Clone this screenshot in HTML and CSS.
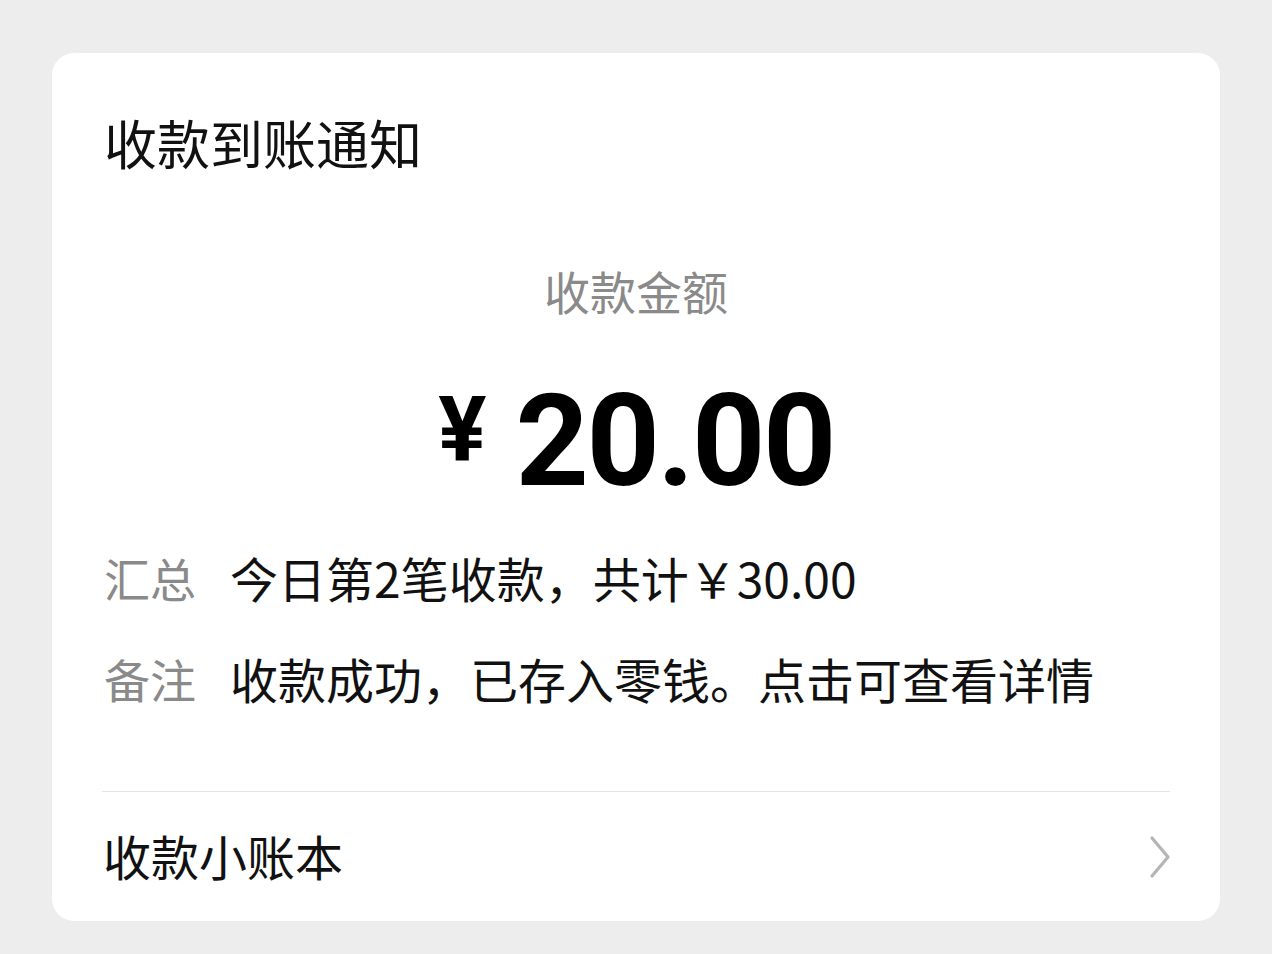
FILE: index.html
```html
<!DOCTYPE html>
<html lang="zh-CN">
<head>
<meta charset="UTF-8">
<meta name="viewport" content="width=device-width, initial-scale=1.0">
<title>收款到账通知</title>
<link rel="stylesheet" href="styles.css">
</head>
<body>

<div class="card">
    <h2 class="title">收款到账通知</h2>

    <div class="amount-label">收款金额</div>
    <div class="amount">
        <span class="currency">¥</span>
        <span class="value">20.00</span>
    </div>

    <div class="info">
        <div class="info-row">
            <span class="info-key">汇总</span>
            <span class="info-val">今日第2笔收款，共计￥30.00</span>
        </div>
        <div class="info-row">
            <span class="info-key">备注</span>
            <span class="info-val">收款成功，已存入零钱。点击可查看详情</span>
        </div>
    </div>

    <div class="footer">
        <span class="footer-text">收款小账本</span>
        <svg class="arrow" width="24" height="44" viewBox="0 0 24 44">
            <path d="M4 3 L20 22 L4 41" fill="none" stroke="#b5b5b5" stroke-width="3.2" stroke-linecap="round" stroke-linejoin="round"/>
        </svg>
    </div>
</div>

</body>
</html>
```

FILE: styles.css
```css
body {
    margin: 0;
    background-color: #ededed;
    font-family: "Noto Sans CJK SC", "Noto Sans", sans-serif;
    color: #111111;
}
.card {
    width: 1168px;
    height: 868px;
    margin: 53px 0 0 52px;
    background-color: #ffffff;
    border-radius: 22px;
    padding: 0 50px;
    box-sizing: border-box;
    display: flex;
    flex-direction: column;
}
.title {
    margin: 63px 0 0 2px;
    font-size: 53px;
    line-height: 53px;
    font-weight: normal;
}
.amount-label {
    margin-top: 98px;
    text-align: center;
    font-size: 46px;
    line-height: 46px;
    color: #8a8a8a;
}
.amount {
    margin-top: 64px;
    display: flex;
    justify-content: center;
    align-items: flex-start;
    font-family: Roboto, "Noto Sans", sans-serif;
    font-weight: bold;
    color: #000000;
}
.currency {
    font-size: 90px;
    line-height: 90px;
    margin: 9px 29px 0 0;
}
.value {
    font-size: 128px;
    line-height: 128px;
    letter-spacing: -2.5px;
}
.info {
    margin-top: 48px;
    display: flex;
    flex-direction: column;
    gap: 53px;
}
.info-row {
    display: flex;
    align-items: center;
    height: 48px;
    margin-left: 2px;
}
.info-key {
    width: 126px;
    font-size: 46px;
    color: #8a8a8a;
}
.info-val {
    font-size: 48px;
}
.footer {
    margin-top: auto;
    height: 129px;
    border-top: 1px solid #e6e6e6;
    display: flex;
    align-items: center;
    justify-content: space-between;
    font-size: 48px;
    padding-left: 1px;
}
.footer-text {
    margin-top: -3px;
}
.arrow {
    margin-right: -2px;
}
```
